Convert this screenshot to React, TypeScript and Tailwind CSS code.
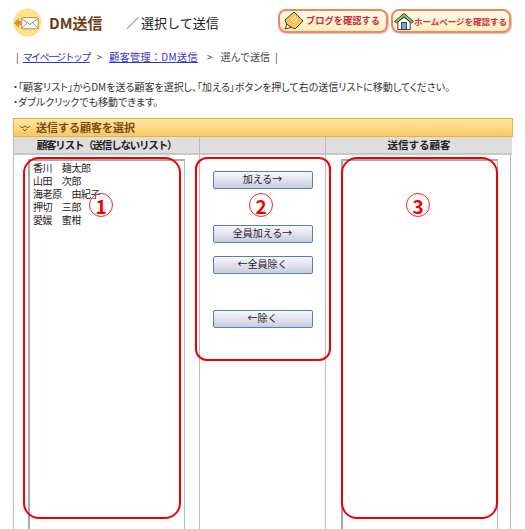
const font = { fontFamily: '"Noto Sans CJK JP", "Liberation Sans", sans-serif' };

function HeadIcon() {
  return (
    <svg width="29" height="29" viewBox="0 0 30 30" className="shrink-0">
      <circle cx="15" cy="15" r="14.500" fill="#fde28a" />
      <rect x="9" y="10" width="17" height="11.500" rx="1.500" fill="#fff" stroke="#a98b62" />
      <path d="M9 11l8.500 6 8.500-6M9 21l6-6M26 21l-6-6" fill="none" stroke="#a98b62" />
      <path d="M1 15.500l5-5v10z" fill="#e8892a" />
      <rect x="5" y="13.500" width="4" height="4" fill="#e8892a" />
    </svg>
  );
}

function PencilIcon() {
  return (
    <svg width="20" height="20" viewBox="0 0 20 20" className="shrink-0">
      <path d="M10 1l9 9-8 8-8-4-2-5z" fill="#f6c95a" stroke="#4a3a20" />
      <path d="M3 13l-2 5 6-1.500z" fill="#fff" stroke="#4a3a20" />
      <path d="M7 10l5-5M9 12l5-5" stroke="#fff" />
    </svg>
  );
}

function HomeIcon() {
  return (
    <svg width="20" height="19" viewBox="0 0 21 20" className="shrink-0">
      <path d="M0.500 10l10-8.500 10 8.500-2 1.500-8-6.500-8 6.500z" fill="#8fce5a" stroke="#333" />
      <path d="M4 10.500v8h13v-8l-6.500-5z" fill="#fff" stroke="#333" />
      <rect x="8" y="11" width="5" height="7.500" fill="#6fb0d8" stroke="#333" />
    </svg>
  );
}

function LinkButton({ w, pad, gap, size, icon, text }: { w: string; pad: string; gap: string; size: string; icon: React.ReactNode; text: string }) {
  return (
    <div className={`${w} ${pad} ${gap} h-[24px] flex items-center rounded-[8px] border-2 border-[#f58560] bg-gradient-to-b from-[#fffbe8] to-[#ffeec0] shadow-[1px_1px_1px_#ccc]`}>
      {icon}
      <span className={`${size} font-bold text-[#c8303a] whitespace-nowrap`}>{text}</span>
    </div>
  );
}

function ActionButton({ label, className = "" }: { label: string; className?: string }) {
  return (
    <div className={`w-[100px] h-[18px] rounded-[2px] border border-[#5a80a8] bg-gradient-to-b from-[#f8f8fc] to-[#c8cce0] text-[10px] text-[#222] leading-[14px] text-center ${className}`}>
      {label}
    </div>
  );
}

function Circled({ n, className }: { n: string; className: string }) {
  return (
    <div className={`absolute top-[193px] w-[24px] h-[24px] rounded-full border border-[#ff2020] flex items-center justify-center text-[19px] leading-none font-bold text-[#f00000] ${className}`}>
      {n}
    </div>
  );
}

export default function App() {
  const names = ["香川　麺太郎", "山田　次郎", "海老原　由紀子", "押切　三郎", "愛媛　蜜柑"];
  return (
    <div className="relative w-[525px] h-[529px] overflow-hidden bg-white text-[#333]" style={font}>
      <div className="flex items-center h-[44px] pl-[13px]">
        <HeadIcon />
        <span className="ml-[7px] text-[15px] font-bold text-[#6b3c12] leading-none w-[54px] whitespace-nowrap">DM送信</span>
        <span className="ml-[23px] w-[152px] flex items-center text-[13px] text-[#222] leading-none whitespace-nowrap">
          <span className="text-[#666] mr-[2px]">／</span>選択して送信
        </span>
        <div className="flex gap-[3px] -mt-[2px]">
          <LinkButton w="w-[110px]" pad="pl-[4px]" gap="gap-[2px]" size="text-[9.25px]" icon={<PencilIcon />} text="ブログを確認する" />
          <LinkButton w="w-[120px]" pad="pl-[1px]" gap="gap-0" size="text-[8.5px]" icon={<HomeIcon />} text="ホームページを確認する" />
        </div>
      </div>

      <div className="mt-[4px] pl-[16px] h-[16px] flex items-center text-[10px] text-[#444] whitespace-nowrap">
        <span className="mr-[4px]">|</span>
        <span className="text-[#3333cc] underline tracking-[-1.6px]">マイページトップ</span>
        <span className="mx-[7px]">&gt;</span>
        <span className="text-[#3333cc] underline tracking-[0.4px]">顧客管理：DM送信</span>
        <span className="ml-[9px] mr-[8px]">&gt;</span>
        <span>選んで送信</span>
        <span className="ml-[5px]">|</span>
      </div>

      <div className="mt-[15px] pl-[13px] text-[10px] leading-[15px] text-[#333] whitespace-nowrap [font-feature-settings:'palt']">
        <p>・「顧客リスト」からDMを送る顧客を選択し、「加える」ボタンを押して右の送信リストに移動してください。</p>
        <p>・ダブルクリックでも移動できます。</p>
      </div>

      <div className="mt-[9px] ml-[13px] w-[500px] h-[19px] flex items-center pl-[5px] gap-[5px] border border-[#e8b048] bg-gradient-to-b from-[#ffe6a0] to-[#fcc860]">
        <svg width="12" height="6" viewBox="0 0 12 6" className="shrink-0">
          <path d="M1 1l2 2 3-2 3 2 2-2M4 4l2 2 2-2" fill="none" stroke="#7a5a20" />
        </svg>
        <span className="text-[11px] font-bold text-[#7a4a12] leading-none">送信する顧客を選択</span>
      </div>

      <div className="ml-[13px] w-[498px] grid grid-cols-[186px_126px_186px] h-[400px] border-x border-[#bbb]">
        <div className="flex flex-col border-r border-[#bbb]">
          <div className="h-[18px] bg-[#dedede] border-b-2 border-[#c8c8c8] text-[10.5px] font-bold text-[#222] text-center leading-[15px] tracking-[-1.2px] whitespace-nowrap">顧客リスト（送信しないリスト）</div>
          <div className="mt-[4px] ml-[14px] w-[157px] h-[400px] border border-[#a8bcd4] border-t-2 border-t-[#aaa] border-l-2 border-l-[#aaa] pl-[3px] pt-[0px] text-[10px] leading-[13px] text-[#222] tracking-[-0.4px]">
            {names.map((n) => (
              <div key={n}>{n}</div>
            ))}
          </div>
        </div>
        <div className="flex flex-col border-r border-[#bbb]">
          <div className="h-[18px] bg-[#dedede] border-b-2 border-[#c8c8c8]" />
          <div className="flex flex-col items-center pt-[16px]">
            <ActionButton label="加える→" />
            <ActionButton label="全員加える→" className="mt-[36px]" />
            <ActionButton label="←全員除く" className="mt-[13px]" />
            <ActionButton label="←除く" className="mt-[36px]" />
          </div>
        </div>
        <div className="flex flex-col">
          <div className="h-[18px] bg-[#dedede] border-b-2 border-[#c8c8c8] text-[10.5px] font-bold text-[#222] text-center leading-[15px]">送信する顧客</div>
          <div className="mt-[4px] ml-[15px] w-[157px] h-[400px] border border-[#a8bcd4] border-t-2 border-t-[#aaa] border-l-2 border-l-[#aaa]" />
        </div>
      </div>

      <div className="absolute left-[23px] top-[157px] w-[158px] h-[362px] rounded-[16px] border-2 border-[#f00000]" />
      <div className="absolute left-[195px] top-[157px] w-[136px] h-[204px] rounded-[12px] border-2 border-[#f00000]" />
      <div className="absolute left-[341px] top-[157px] w-[157px] h-[362px] rounded-[16px] border-2 border-[#f00000]" />
      <Circled n="1" className="left-[89px]" />
      <Circled n="2" className="left-[249px]" />
      <Circled n="3" className="left-[406px]" />
    </div>
  );
}
